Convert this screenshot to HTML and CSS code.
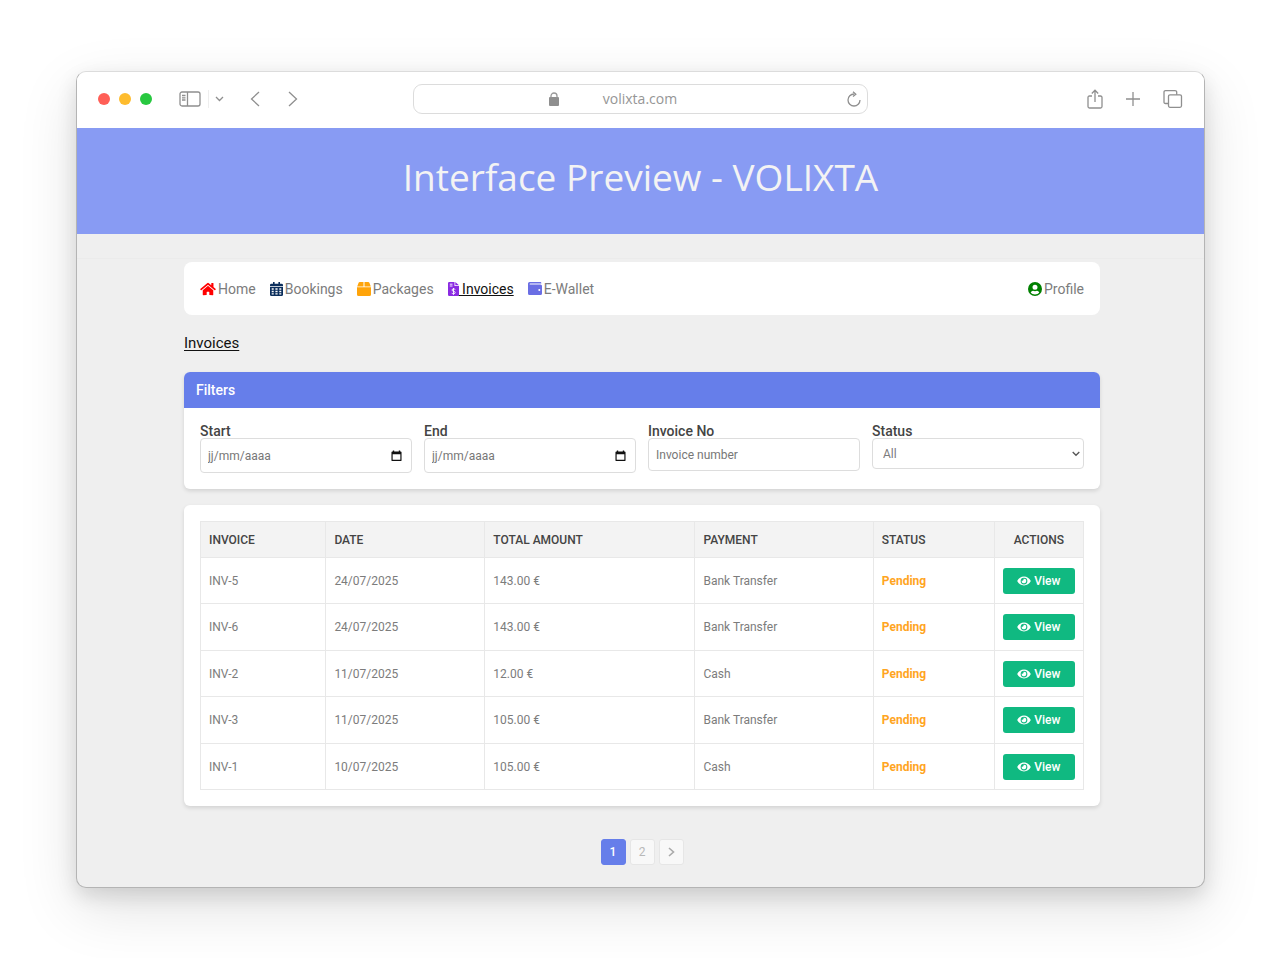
FILE: index.html
```
<!DOCTYPE html>
<html lang="en">
<head>
<meta charset="utf-8">
<meta name="viewport" content="width=device-width, initial-scale=1">
<title>Invoices - VOLIXTA</title>
<link rel="stylesheet" href="styles.css">
</head>
<body>
<svg class="sprite" aria-hidden="true">
  <symbol id="eye" viewBox="0 0 576 512"><path d="M572.52 241.4C518.29 135.59 410.93 64 288 64S57.68 135.64 3.48 241.41a32.35 32.35 0 0 0 0 29.19C57.71 376.41 165.07 448 288 448s230.32-71.64 284.52-177.41a32.35 32.35 0 0 0 0-29.19zM288 400a144 144 0 1 1 144-144 143.93 143.93 0 0 1-144 144zm0-240a95.31 95.31 0 0 0-25.31 3.79 47.85 47.85 0 0 1-66.9 66.9A95.78 95.78 0 1 0 288 160z"/></symbol>
  <symbol id="calendar" viewBox="0 0 12 12"><path fill-rule="evenodd" d="M2 1V0h1.500v1h5V0H10v1h.5Q11.500 1 11.500 2v8.500Q11.500 11.500 10.500 11.500h-9Q.5 11.500.5 10.500V2Q.5 1 1.500 1zM1.800 4.200v6h8.400v-6z"/></symbol>
</svg>
<div class="window">
  <header class="toolbar">
    <div class="toolbar-left">
      <div class="lights"><span class="light red"></span><span class="light yellow"></span><span class="light green"></span></div>
      <div class="side-tools">
        <button class="tool" aria-label="Sidebar"><svg width="22" height="16" viewBox="0 0 22 16"><rect x="1" y="1" width="20" height="14" rx="2"/><path d="M8.500 1v14M3 4.500h3.500M3 6.800h3.500M3 9h3.500"/></svg></button>
        <button class="tool split" aria-label="Tab groups"><svg width="9" height="6" viewBox="0 0 9 6"><path d="M1 1l3.500 3.500L8 1"/></svg></button>
      </div>
      <div class="history">
        <button class="tool" aria-label="Back"><svg width="10" height="16" viewBox="0 0 10 16"><path d="M9 1L1.500 8 9 15"/></svg></button>
        <button class="tool" aria-label="Forward"><svg width="10" height="16" viewBox="0 0 10 16"><path d="M1 1l7.500 7L1 15"/></svg></button>
      </div>
    </div>
    <div class="address">
      <svg class="lock" width="12" height="14" viewBox="0 0 12 14"><rect x="1" y="5" width="10" height="9" rx="1"/><path d="M3 5.500V4a3 3 0 0 1 6 0v1.500" fill="none" stroke="#999" stroke-width="1.300"/></svg>
      <span class="url">volixta.com</span>
      <button class="tool" aria-label="Reload"><svg width="14" height="16" viewBox="0 0 14 16"><path d="M7 3a6 6 0 1 0 6 6M6 .8L8.800 3.200 6 5.500"/></svg></button>
    </div>
    <div class="toolbar-right">
      <button class="tool" aria-label="Share"><svg width="16" height="20" viewBox="0 0 16 20"><path d="M5 7H2.500Q1 7 1 8.500v9Q1 19 2.500 19h11q1.500 0 1.500-1.500v-9Q15 7 13.500 7H11M8 13V1.500M4.800 4.500L8 1.200l3.200 3.300"/></svg></button>
      <button class="tool" aria-label="New tab"><svg width="14" height="14" viewBox="0 0 14 14"><path d="M7 0v14M0 7h14"/></svg></button>
      <button class="tool" aria-label="Tabs"><svg width="20" height="18" viewBox="0 0 20 18"><path d="M5.500 13.500H2.500Q1 13.500 1 12V2q0-1.300 1.500-1.300h9.500Q13.700.7 13.700 2v2.800"/><rect x="5.500" y="4.800" width="13" height="12.500" rx="1.500"/></svg></button>
    </div>
  </header>
  <div class="banner"><h1>Interface Preview - VOLIXTA</h1></div>
  <div class="strip"></div>
  <main class="content">
    <nav class="nav">
      <a href="#"><svg class="home" width="16" height="14" viewBox="0 0 576 512"><path d="M280.37 148.26L96 300.11V464a16 16 0 0 0 16 16l112.06-.29a16 16 0 0 0 15.92-16V368a16 16 0 0 1 16-16h64a16 16 0 0 1 16 16v95.64a16 16 0 0 0 16 16.05L464 480a16 16 0 0 0 16-16V300L295.67 148.26a12.19 12.19 0 0 0-15.3 0zM571.6 251.47L488 182.56V44.05a12 12 0 0 0-12-12h-56a12 12 0 0 0-12 12v72.61L318.47 43a48 48 0 0 0-61 0L4.340 251.47a12 12 0 0 0-1.600 16.9l25.5 31A12 12 0 0 0 45.15 301l235.22-193.74a12.19 12.19 0 0 1 15.3 0L530.9 301a12 12 0 0 0 16.9-1.600l25.5-31a12 12 0 0 0-1.700-16.93z"/></svg><span>Home</span></a>
      <a href="#"><svg class="bookings" width="13" height="14" viewBox="0 0 13 14"><path fill-rule="evenodd" d="M3 0h1.600v1.700h3.800V0H10v1.700h1.500Q13 1.700 13 3v1H0V3q0-1.300 1.500-1.300H3zM0 4.800h13v7.900Q13 14 11.500 14h-10Q0 14 0 12.700zM1.700 6.200v1.600h2V6.200zm3.700 0v1.600h2.200V6.200zm3.900 0v1.600h2V6.200zM1.700 8.800v1.400h2V8.800zm3.700 0v1.400h2.200V8.800zm3.900 0v1.400h2V8.800zM1.700 11.200v1.400h2v-1.400zm3.700 0v1.400h2.200v-1.400zm3.900 0v1.400h2v-1.400z"/></svg><span>Bookings</span></a>
      <a href="#"><svg class="packages" width="14" height="14" viewBox="0 0 14 14"><path d="M2.800 0h3.700v4.600H.2L1.600.8Q1.900 0 2.800 0zM7.500 0h3.700q.9 0 1.200.8l1.400 3.800H7.500zM0 5.300h14v7.200q0 1.500-1.500 1.500h-11Q0 14 0 12.500z"/></svg><span>Packages</span></a>
      <a href="#" class="current" aria-current="page"><svg class="invoices" width="11" height="14" viewBox="0 0 11 14"><path d="M1.300 0H6.500v4H11v8.700Q11 14 9.700 14H1.300Q0 14 0 12.700V1.300Q0 0 1.300 0zM7.300 0L11 3.300H7.300z"/><path d="M1.800 2.200h2.700M1.800 4h2.700M7.300 7.500Q6.700 7 5.500 7 4 7 4 8t1.500 1.300Q7.200 9.500 7.200 10.600T5.500 11.700Q4.300 11.700 3.700 11.200M5.500 6v6.800" fill="none" stroke="#fff" stroke-width=".9"/></svg><span>&nbsp;Invoices</span></a>
      <a href="#"><svg class="wallet" width="14" height="13" viewBox="0 0 14 13"><path fill-rule="evenodd" d="M1.600 0h10.900q.8 0 .8 1v.5H2.200Q1.600 1.500 1.600 2t.6.500h10.300Q14 2.500 14 4v7.500q0 1.500-1.500 1.500h-11Q0 13 0 11.500v-10Q0 0 1.600 0zM11.300 6.900a1 1 0 1 0 0 2 1 1 0 0 0 0-2z"/></svg><span>E-Wallet</span></a>
      <a href="#" class="profile"><svg width="14" height="14" viewBox="0 0 14 14"><path fill-rule="evenodd" d="M7 0a7 7 0 1 1 0 14A7 7 0 0 1 7 0zm0 2.700a2.500 2.500 0 1 0 0 5 2.500 2.500 0 0 0 0-5zM2.700 10.800Q4.200 12.600 7 12.600t4.300-1.800Q10.600 8.800 9 8.800 8 9.200 7 9.200T5 8.800Q3.400 8.800 2.700 10.800z"/></svg><span>Profile</span></a>
    </nav>
    <h2>Invoices</h2>
    <section class="card filters">
      <h3>Filters</h3>
      <form class="fields">
        <div class="field"><label for="start">Start</label><div class="date"><input id="start" type="text" placeholder="jj/mm/aaaa"><button type="button" aria-label="Choose start date"><svg width="11" height="12"><use href="#calendar"/></svg></button></div></div>
        <div class="field"><label for="end">End</label><div class="date"><input id="end" type="text" placeholder="jj/mm/aaaa"><button type="button" aria-label="Choose end date"><svg width="11" height="12"><use href="#calendar"/></svg></button></div></div>
        <div class="field"><label for="number">Invoice No</label><input id="number" class="number" type="text" placeholder="Invoice number"></div>
        <div class="field"><label for="status">Status</label><div class="select"><select id="status"><option>All</option></select><svg width="8" height="6" viewBox="0 0 8 6"><path d="M.7 1L4 4.300 7.300 1"/></svg></div></div>
      </form>
    </section>
    <section class="card list">
      <table>
        <colgroup><col class="c-invoice"><col class="c-date"><col class="c-total"><col class="c-payment"><col class="c-status"><col class="c-actions"></colgroup>
        <thead><tr><th>INVOICE</th><th>DATE</th><th>TOTAL AMOUNT</th><th>PAYMENT</th><th>STATUS</th><th>ACTIONS</th></tr></thead>
        <tbody>
          <tr><td>INV-5</td><td>24/07/2025</td><td>143.00 €</td><td>Bank Transfer</td><td class="pending">Pending</td><td><button class="view"><svg width="14" height="12"><use href="#eye"/></svg>View</button></td></tr>
          <tr><td>INV-6</td><td>24/07/2025</td><td>143.00 €</td><td>Bank Transfer</td><td class="pending">Pending</td><td><button class="view"><svg width="14" height="12"><use href="#eye"/></svg>View</button></td></tr>
          <tr><td>INV-2</td><td>11/07/2025</td><td>12.00 €</td><td>Cash</td><td class="pending">Pending</td><td><button class="view"><svg width="14" height="12"><use href="#eye"/></svg>View</button></td></tr>
          <tr><td>INV-3</td><td>11/07/2025</td><td>105.00 €</td><td>Bank Transfer</td><td class="pending">Pending</td><td><button class="view"><svg width="14" height="12"><use href="#eye"/></svg>View</button></td></tr>
          <tr><td>INV-1</td><td>10/07/2025</td><td>105.00 €</td><td>Cash</td><td class="pending">Pending</td><td><button class="view"><svg width="14" height="12"><use href="#eye"/></svg>View</button></td></tr>
        </tbody>
      </table>
    </section>
    <nav class="pages" aria-label="Pages">
      <a href="#" class="active" aria-current="page">1</a><a href="#">2</a><a href="#" aria-label="Next"><svg width="7" height="10" viewBox="0 0 7 10"><path d="M1 1l4.500 4L1 9"/></svg></a>
    </nav>
  </main>
</div>
</body>
</html>
```
FILE: styles.css
```
* { box-sizing: border-box; }
body {
  margin: 0;
  padding: 71px 75px 70px 76px;
  background: #fff;
  color: #7c7c7c;
  font: 12px/16px Roboto, sans-serif;
}
h1, h2, h3 { margin: 0; font-weight: 400; }
a { color: inherit; text-decoration: none; }
button, input, select { font: inherit; margin: 0; padding: 0; border: 0; background: none; color: inherit; }
svg { display: block; flex: none; fill: currentColor; }
.sprite { position: absolute; width: 0; height: 0; }

.window {
  border: 1px solid #b4b4b4;
  border-top-color: #dcdcdc;
  border-radius: 10px;
  overflow: hidden;
  background: #efefef;
  box-shadow: 0 20px 60px rgba(0, 0, 0, .12), 0 8px 20px rgba(0, 0, 0, .12);
}
.toolbar {
  display: grid;
  grid-template-columns: 1fr 455px 1fr;
  align-items: center;
  height: 56px;
  padding: 0 21px 2px 20px;
  background: #fff;
}
.toolbar-left, .lights, .side-tools, .history, .toolbar-right { display: flex; align-items: center; }
.lights { gap: 9px; padding-left: 1px; }
.light { width: 12px; height: 12px; border-radius: 50%; }
.red { background: #ff5f57; }
.yellow { background: #febc2e; }
.green { background: #28c840; }
.side-tools { margin-left: 27px; gap: 7px; }
.tool svg { fill: none; stroke: #8f8f8f; stroke-width: 1.3; }
.split { padding: 6px 0 6px 6px; border-left: 1px solid #eee; }
.history { margin-left: 26px; gap: 28px; }
.toolbar-right { justify-content: flex-end; gap: 23px; }
.address {
  display: grid;
  grid-template-columns: 1fr auto 1fr;
  align-items: center;
  height: 30px;
  padding: 0 6px;
  border: 1px solid #dcdcdc;
  border-radius: 9px;
}
.lock { justify-self: end; margin-right: 43px; fill: #8f8f8f; }
.url { color: #969696; font: 14px/20px "Open Sans", sans-serif; }
.address .tool { justify-self: end; }

.banner { display: flex; align-items: center; justify-content: center; height: 106px; padding-bottom: 8px; background: #889bf3; }
.banner h1 { color: #f3f3f3; font: 37px/52px "Open Sans", sans-serif; }
.strip { height: 25px; border-bottom: 1px solid #ebebeb; }

.content { padding: 3px 104px 22px 107px; }
.nav {
  display: flex;
  align-items: center;
  gap: 14px;
  height: 53px;
  padding: 0 16px;
  border-radius: 8px;
  background: #fff;
  font-size: 14px;
}
.nav a { display: flex; align-items: center; gap: 2px; }
.nav .current { gap: 0; color: #111; }
.current span { text-decoration: underline; }
.home { fill: #f00; }
.bookings { fill: #0b2e5c; }
.packages { fill: #ffa40a; }
.invoices { fill: #8a2be2; }
.wallet { fill: #6a6ee4; }
.nav .profile { margin-left: auto; }
.profile svg { fill: #008000; }

h2 { margin: 18px 0 19px; color: #111; font-size: 15px; line-height: 20px; text-decoration: underline; text-underline-offset: 2px; }
.card { border-radius: 6px; background: #fff; box-shadow: 0 2px 4px rgba(0, 0, 0, .12); }
h3 { padding: 8px 12px; border-radius: 6px 6px 0 0; background: #667eea; color: #fff; font-size: 14px; line-height: 20px; font-weight: 500; }
.fields { display: grid; grid-template-columns: repeat(4, 1fr); gap: 12px; padding: 16px; }
.field { display: flex; flex-direction: column; }
.field label { color: #444; font-size: 14px; line-height: 14px; font-weight: 500; }
.date, .number, .select { border: 1px solid #ddd; border-radius: 4px; }
.date { display: flex; align-items: center; height: 35px; padding: 0 9px 0 7px; }
.date input { flex: 1; min-width: 0; }
.date button { color: #111; }
input::placeholder { color: #777; opacity: 1; }
.number { height: 33px; padding: 0 7px; }
.select { display: flex; align-items: center; height: 31px; padding-right: 3px; }
.select select { flex: 1; align-self: stretch; padding-left: 10px; appearance: none; }
.select svg { fill: none; stroke: #555; stroke-width: 1.3; }

.list { margin-top: 16px; padding: 16px; }
table { width: 100%; border-collapse: collapse; table-layout: fixed; }
.c-invoice { width: 14.2%; }
.c-date { width: 18%; }
.c-total { width: 23.8%; }
.c-payment { width: 20.2%; }
.c-status { width: 13.7%; }
.c-actions { width: 10.1%; }
th, td { padding: 0 8px; border: 1px solid #e8e8e8; text-align: left; }
th { height: 36px; background: #f3f3f3; color: #444; font-weight: 500; }
td { height: 46px; }
tr:nth-child(even) td { height: 47px; }
th:last-child { text-align: center; }
td.pending { color: #ffa51f; font-weight: 700; }
.view {
  display: flex;
  align-items: center;
  justify-content: center;
  gap: 3px;
  width: 100%;
  height: 26px;
  border-radius: 3px;
  background: #10b981;
  color: #fff;
  font-weight: 500;
}

.pages { display: flex; justify-content: center; gap: 4px; margin-top: 33px; }
.pages a {
  display: flex;
  align-items: center;
  justify-content: center;
  width: 25px;
  height: 26px;
  border: 1px solid #e6e6e6;
  border-radius: 3px;
  background: #f8f8f8;
  color: #b8b8b8;
}
.pages .active { border-color: #667eea; background: #667eea; color: #fff; font-weight: 500; }
.pages svg { fill: none; stroke: #aaa; stroke-width: 1.6; }
```
